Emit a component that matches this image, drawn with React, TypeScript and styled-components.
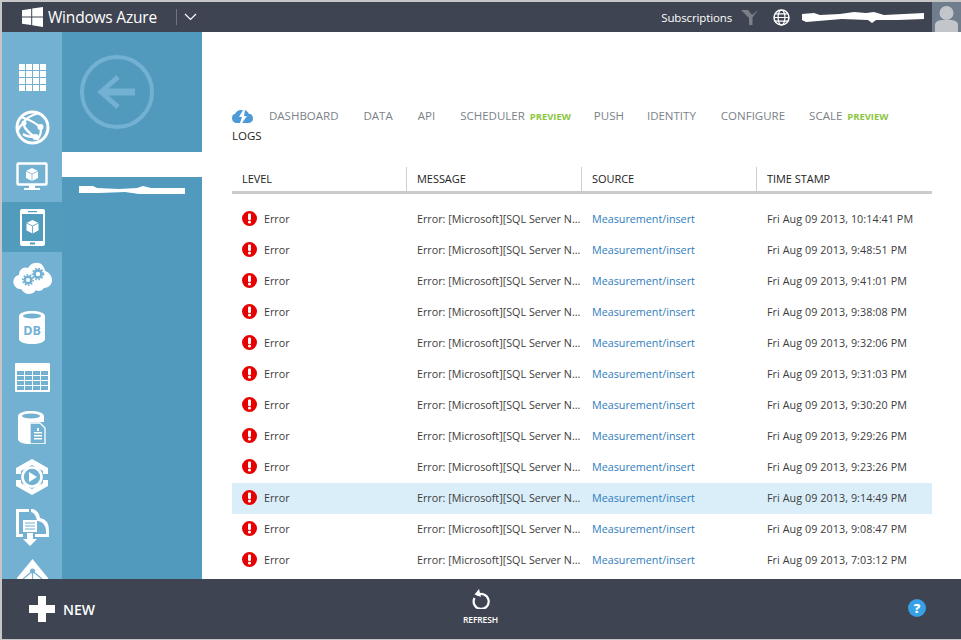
import React from "react";
import styled, { createGlobalStyle } from "styled-components";

const Global = createGlobalStyle`
  html, body { margin: 0; padding: 0; background: #fff; overflow: hidden; }
  body { font-family: "Open Sans", "Noto Sans", "Liberation Sans", sans-serif; }
`;

const Frame = styled.div`
  width: 961px; height: 640px; box-sizing: border-box;
  padding: 2px 0 1px 2px; background: #c6c6c6;
  display: flex; flex-direction: column; overflow: hidden;
`;
const TopBar = styled.header`
  height: 30px; flex: none; background: #3e4451; color: #fff;
  display: flex; align-items: center; padding-left: 20px;
`;
const Brand = styled.div`
  font-size: 15.5px; letter-spacing: -0.2px; margin-left: 5px; width: 128px; white-space: nowrap;
`;
const Divider = styled.span`
  width: 1px; height: 16px; background: #6e7480; margin-right: 7px;
`;
const Spacer = styled.div`flex: 1;`;
const Subs = styled.span`
  font-size: 11.5px; letter-spacing: -0.13px; margin-right: 9px;
`;
const TopGap = styled.span<{ $w: number }>`width: ${(p) => p.$w}px; flex: none;`;
const Avatar = styled.div`
  width: 29px; height: 30px; background: #707d8d; margin-left: 8px; overflow: hidden;
`;
const Body = styled.div`
  flex: 1; min-height: 0; display: flex; background: #fff;
`;
const Rail = styled.nav`
  width: 60px; flex: none; background: #73b1d3; padding-top: 20px; overflow: hidden;
  display: flex; flex-direction: column;
`;
const RailItem = styled.div<{ $active?: boolean }>`
  height: 50px; flex: none; display: flex; align-items: center; justify-content: center;
  background: ${(p) => (p.$active ? "#519bbd" : "transparent")};
`;
const SubPanel = styled.aside`
  width: 140px; flex: none; background: #519abd; display: flex; flex-direction: column;
`;
const BackArea = styled.div`
  height: 120px; display: flex; align-items: flex-start; justify-content: center;
  padding: 23px 30px 0 0; box-sizing: border-box; flex: none;
`;
const SelectedBand = styled.div`height: 25px; background: #fff; flex: none;`;
const Scribble = styled.div`padding: 9px 0 0 17px; line-height: 0;`;
const Main = styled.main`
  flex: 1; min-width: 0; padding: 74px 29px 0 30px; overflow: hidden;
`;
const Tabs = styled.div`
  display: flex; flex-wrap: wrap; align-items: baseline; font-size: 11.5px; line-height: 20px; color: #7b8288;
`;
const Cloud = styled.span`width: 37px; height: 20px; display: flex; align-items: center; align-self: center;`;
const Tab = styled.span<{ $gap: number }>`
  margin-right: ${(p) => p.$gap}px; white-space: nowrap;
`;
const Preview = styled.b`
  color: #8cc63f; font-size: 9.5px; font-weight: 700; margin-left: 5px; letter-spacing: -0.05px;
`;
const LogsTab = styled.div`
  flex-basis: 100%; color: #222; margin-top: -1px;
`;
const Head = styled.div`
  display: grid; grid-template-columns: 175px 175px 175px 175px; margin-top: 21px; height: 24px;
  border-bottom: 3px solid #cbcbcb;
`;
const HeadCell = styled.div`
  font-size: 11px; color: #222; line-height: 24px; padding-left: 10px; letter-spacing: -0.05px;
  border-right: 1px solid #cfcfcf;
  &:last-child { border-right: none; }
`;
const Rows = styled.div`padding-top: 10px;`;
const Row = styled.div<{ $selected?: boolean }>`
  display: grid; grid-template-columns: 175px 175px 175px 175px; height: 31px; align-items: center;
  box-sizing: border-box; padding-bottom: 2px;
  font-size: 10.75px; color: #3c3c3c; background: ${(p) => (p.$selected ? "#daeefa" : "transparent")};
`;
const LevelCell = styled.div`display: flex; align-items: center; gap: 7px; padding-left: 10px;`;
const Cell = styled.div`padding-left: 10px; white-space: nowrap;`;
const SourceLink = styled(Cell)`color: #2f7dbd;`;
const TimeCell = styled(Cell)`letter-spacing: 0.07px;`;
const Footer = styled.footer`
  height: 60px; flex: none; background: #3e4451; color: #fff; display: grid;
  grid-template-columns: 1fr 1fr 1fr; align-items: center; padding: 0 35px 0 27px;
`;
const NewBtn = styled.div`
  display: flex; align-items: center; gap: 8px; font-size: 14px; font-weight: 600;
`;
const Refresh = styled.div`
  display: flex; flex-direction: column; align-items: center; gap: 5px;
  font-size: 8.5px; font-weight: 600; margin: -4px 0 0 6px; letter-spacing: -0.15px;
`;
const Help = styled.div`
  justify-self: end; width: 18px; height: 18px; border-radius: 50%; background: #37a0e6;
  color: #fff; font-size: 13px; font-weight: 800; display: flex; align-items: center; justify-content: center;
  margin-top: -2px;
`;

const Blue = "#73b1d3";
const WinLogo = () => (
  <svg width="21" height="20" viewBox="0 0 21 20">
    <path d="M0 3.2 9.2 1.8V9.4H0ZM10.2 1.6 21 0V9.4H10.2ZM0 10.4H9.2V18L0 16.7ZM10.2 10.4H21V20L10.2 18.3Z" fill="#fff" />
  </svg>
);
const Chevron = () => (
  <svg width="13" height="8" viewBox="0 0 13 8"><path d="M1 1l5.500 5.500L12 1" fill="none" stroke="#fff" strokeWidth="1.200" /></svg>
);
const Funnel = () => (
  <svg width="17" height="15" viewBox="0 0 17 15"><path d="M0 0h7l4 5 6-5-5.500 7.500V15H8V8Z" fill="#7b8088" /></svg>
);
const Globe = () => (
  <svg width="17" height="17" viewBox="0 0 17 17" fill="none" stroke="#fff" strokeWidth="1.500">
    <circle cx="8.500" cy="8.500" r="7.500" /><ellipse cx="8.500" cy="8.500" rx="3.400" ry="7.500" strokeWidth="1.200" />
    <path d="M1 8.500h15M2 4.800h13M2 12.200h13" strokeWidth="1.200" />
  </svg>
);
const EmailBlot = () => (
  <svg width="122" height="12" viewBox="0 0 122 12" style={{ display: "block" }}>
    <path d="M0 3 12 2 18 4 38 3 52 1 64 2 72 1 82 4 122 2V8L96 9H74L70 12 66 9 40 8 28 9 16 10 4 11 0 9Z" fill="#fff" />
  </svg>
);
const Person = () => (
  <svg width="29" height="30" viewBox="0 0 29 30">
    <circle cx="14.500" cy="11" r="7" fill="#c2c6cb" /><path d="M3 30v-7q0-4 6-5h11q6 1 6 5v7Z" fill="#c2c6cb" />
  </svg>
);
const GridIcon = () => (
  <svg width="27" height="27" viewBox="0 0 27 27" fill="#fff">
    {[0, 1, 2, 3].flatMap((r) => [0, 1, 2, 3].map((c) => <rect key={`${r}${c}`} x={c * 7} y={r * 7} width="6" height="6" />))}
  </svg>
);
const WebIcon = () => (
  <svg width="35" height="35" viewBox="0 0 35 35" fill="none" stroke="#fff">
    <circle cx="17.500" cy="17.500" r="15.500" strokeWidth="3" />
    <path d="M6 7c6 2 13 4 19 10M24 3C17 5 10 8 9 13c-1 4 5 10 11 14M8 24c4 3 8 3 12 3M25 17c2 4 1 8-3 13M3 20c1-3 3-5 6-7" strokeWidth="2.200" />
    <circle cx="25.500" cy="17" r="3" fill="#fff" stroke="none" /><circle cx="20.500" cy="27" r="3" fill="#fff" stroke="none" /><circle cx="9" cy="13" r="2.500" fill="#fff" stroke="none" />
  </svg>
);
const MonitorIcon = () => (
  <svg width="32" height="30" viewBox="0 0 32 30">
    <rect x="1.500" y="1.500" width="29" height="21" rx="1" fill="none" stroke="#fff" strokeWidth="2.400" />
    <path d="M16 6l6 3v7l-6 3-6-3V9Z" fill="#fff" /><path d="M10 9l6 3 6-3M16 12v7" stroke={Blue} strokeWidth=".8" fill="none" />
    <path d="M13 23h6v3h5v2H8v-2h5Z" fill="#fff" />
  </svg>
);
const PhoneIcon = () => (
  <svg width="25" height="37" viewBox="0 0 25 37">
    <rect width="25" height="37" rx="2" fill="#fff" /><rect x="2" y="5" width="21" height="27" fill="#519bbd" />
    <rect x="8" y="2" width="9" height="1.200" fill="#519bbd" /><rect x="10" y="33.500" width="5" height="2" fill="#519bbd" />
    <path d="M12.500 11l6 3v7.500l-6 3-6-3V14Z" fill="#fff" /><path d="M6.500 14l6 3 6-3M12.500 17v7.500" stroke="#519bbd" strokeWidth=".8" fill="none" />
  </svg>
);
const CloudGears = () => (
  <svg width="39" height="33" viewBox="0 0 39 33">
    <path d="M8 28C2 28-1 22 1 18c1-3 4-4 5-4C6 8 11 5 15 7c3-6 12-7 15-2 2 3 2 4 2 5 4 1 7 5 7 9 0 5-4 8-8 8-2 3-6 4-8 2-2 4-8 5-11 3-2-1-3-3-4-4Z" fill="#fff" />
    <g fill={Blue}><circle cx="15" cy="19" r="4.600" /><circle cx="25" cy="13" r="4.900" /></g>
    <g fill="none" stroke={Blue} strokeWidth="1.600" strokeDasharray="1.600 1.600"><circle cx="15" cy="19" r="5.200" /><circle cx="25" cy="13" r="5.500" /></g>
    <circle cx="15" cy="19" r="2" fill="#fff" /><circle cx="25" cy="13" r="2.200" fill="#fff" />
  </svg>
);
const DbIcon = () => (
  <svg width="26" height="33" viewBox="0 0 26 33">
    <path d="M0 5C0 2 6 0 13 0s13 2 13 5v23c0 3-6 5-13 5S0 31 0 28Z" fill="#fff" />
    <ellipse cx="13" cy="5" rx="9" ry="2.400" fill={Blue} />
    <text x="13" y="24" textAnchor="middle" fontFamily="Open Sans, sans-serif" fontWeight="700" fontSize="12.500" fill={Blue}>DB</text>
  </svg>
);
const TableIcon = () => (
  <svg width="35" height="29" viewBox="0 0 35 29">
    <rect width="35" height="29" rx="1" fill="#fff" />
    {[0, 1, 2, 3].flatMap((r) => [0, 1, 2, 3].map((c) => <rect key={`${r}${c}`} x={2 + c * 8} y={8 + r * 5} width="7" height="4" fill={Blue} />))}
  </svg>
);
const FileDbIcon = () => (
  <svg width="28" height="33" viewBox="0 0 28 33">
    <path d="M0 5C0 2 6 0 13 0s13 2 13 5v6H12v22C5 33 0 31 0 28Z" fill="#fff" />
    <ellipse cx="13" cy="5" rx="9" ry="2.400" fill={Blue} />
    <path d="M12 12h10l5 5v16H12Z" fill={Blue} stroke="#fff" strokeWidth="1.300" />
    <path d="M19 17h2v3h-2ZM16 21h8v1.400h-8ZM16 24h8v1.400h-8ZM16 27h8v1.400h-8Z" fill="#fff" />
  </svg>
);
const MediaIcon = () => (
  <svg width="32" height="36" viewBox="0 0 32 36">
    <path d="M16 0 32 9v6h-5v-3L16 6 5 12v3H0V9ZM0 21h5v3l11 6 11-6v-3h5v6l-16 9-16-9Z" fill="#fff" />
    <circle cx="16" cy="18" r="9.500" fill="none" stroke="#fff" strokeWidth="2.600" /><path d="M13 13l8 5-8 5Z" fill="#fff" />
  </svg>
);
const ImportIcon = () => (
  <svg width="33" height="37" viewBox="0 0 33 37">
    <path d="M0 0h13v3H3v22h4v3H0ZM15 0h2q6 2 7 9 9 1 9 13v6H19v-3h11v-3c0-6-4-10-9-10-1-6-3-8-6-9Z" fill="#fff" />
    <path d="M7 11h14v12H7Z" fill="#fff" /><path d="M9 14h10M9 17h10M9 20h10" stroke={Blue} strokeWidth="1.200" />
    <path d="M11 24h6v6h4l-7 7-7-7h4Z" fill="#fff" />
  </svg>
);
const NetworkIcon = () => (
  <svg width="31" height="37" viewBox="0 0 31 37">
    <path d="M15.500 0 31 19v18H0V19Z" fill="#fff" /><circle cx="15.500" cy="12" r="2.500" fill={Blue} />
    <path d="M15.500 12 6 20M15.500 12 25 20M15.500 12v9" stroke={Blue} strokeWidth="1.200" />
  </svg>
);
const BackIcon = () => (
  <svg width="74" height="74" viewBox="0 0 74 74" fill="none" stroke="#73b1d3">
    <circle cx="37" cy="37" r="35" strokeWidth="4" />
    <path d="M55 37H24" strokeWidth="7" /><path d="M38 22 21 37l17 15" strokeWidth="5" />
  </svg>
);
const MobileCloud = () => (
  <svg width="21" height="13" viewBox="0 0 21 13">
    <path d="M5 13C2 13 0 11 0 8c0-2 1-4 3-4 1-2 3-4 6-4h2L7 7h3L8 13ZM13 0c2 1 3 2 4 4 3 0 4 2 4 5 0 2-2 4-5 4h-6l5-7h-3Z" fill="#4d9ad6" />
  </svg>
);
const ErrorIcon = () => (
  <svg width="15" height="15" viewBox="0 0 15 15">
    <circle cx="7.500" cy="7.500" r="7.500" fill="#e60000" /><rect x="6" y="2.500" width="3" height="6.500" rx="1" fill="#fff" /><circle cx="7.500" cy="11" r="1.600" fill="#fff" />
  </svg>
);
const Plus = () => (
  <svg width="26" height="26" viewBox="0 0 26 26"><path d="M9 0h8v9h9v8h-9v9H9v-9H0V9h9Z" fill="#fff" /></svg>
);
const RefreshIcon = () => (
  <svg width="18" height="20" viewBox="0 0 18 20" fill="none">
    <path d="M5 6.200A7.500 7.500 0 1 1 2.500 9" stroke="#fff" strokeWidth="2.200" />
    <path d="M7 0 2.500 5.500 9 8Z" fill="#fff" />
  </svg>
);
const SideBlot = () => (
  <svg width="106" height="8" viewBox="0 0 106 8">
    <path d="M0 0h14l4 2 22 1 18-1 6-2 8 2h34v6H60L46 6 20 7 0 7Z" fill="#fff" />
  </svg>
);

const times = [
  "10:14:41 PM", "9:48:51 PM", "9:41:01 PM", "9:38:08 PM", "9:32:06 PM", "9:31:03 PM",
  "9:30:20 PM", "9:29:26 PM", "9:23:26 PM", "9:14:49 PM", "9:08:47 PM", "7:03:12 PM",
];
const icons = [<GridIcon />, <WebIcon />, <MonitorIcon />, <PhoneIcon />, <CloudGears />, <DbIcon />, <TableIcon />, <FileDbIcon />, <MediaIcon />, <ImportIcon />, <NetworkIcon />];

export default function App() {
  return (
    <Frame>
      <Global />
      <TopBar>
        <WinLogo />
        <Brand>Windows Azure</Brand>
        <Divider />
        <Chevron />
        <Spacer />
        <Subs>Subscriptions</Subs>
        <Funnel />
        <TopGap $w={15} />
        <Globe />
        <TopGap $w={12} />
        <EmailBlot />
        <Avatar><Person /></Avatar>
      </TopBar>
      <Body>
        <Rail>
          {icons.map((ic, i) => <RailItem key={i} $active={i === 3}>{ic}</RailItem>)}
        </Rail>
        <SubPanel>
          <BackArea><BackIcon /></BackArea>
          <SelectedBand />
          <Scribble><SideBlot /></Scribble>
        </SubPanel>
        <Main>
          <Tabs>
            <Cloud><MobileCloud /></Cloud>
            <Tab $gap={25}>DASHBOARD</Tab>
            <Tab $gap={25}>DATA</Tab>
            <Tab $gap={25}>API</Tab>
            <Tab $gap={23}>SCHEDULER<Preview>PREVIEW</Preview></Tab>
            <Tab $gap={23}>PUSH</Tab>
            <Tab $gap={25}>IDENTITY</Tab>
            <Tab $gap={24}>CONFIGURE</Tab>
            <Tab $gap={0}>SCALE<Preview>PREVIEW</Preview></Tab>
            <LogsTab>LOGS</LogsTab>
          </Tabs>
          <Head>
            <HeadCell>LEVEL</HeadCell>
            <HeadCell>MESSAGE</HeadCell>
            <HeadCell>SOURCE</HeadCell>
            <HeadCell>TIME STAMP</HeadCell>
          </Head>
          <Rows>
            {times.map((t, i) => (
              <Row key={t} $selected={i === 9}>
                <LevelCell><ErrorIcon />Error</LevelCell>
                <Cell>Error: [Microsoft][SQL Server N...</Cell>
                <SourceLink>Measurement/insert</SourceLink>
                <TimeCell>Fri Aug 09 2013, {t}</TimeCell>
              </Row>
            ))}
          </Rows>
        </Main>
      </Body>
      <Footer>
        <NewBtn><Plus />NEW</NewBtn>
        <Refresh><RefreshIcon />REFRESH</Refresh>
        <Help>?</Help>
      </Footer>
    </Frame>
  );
}
